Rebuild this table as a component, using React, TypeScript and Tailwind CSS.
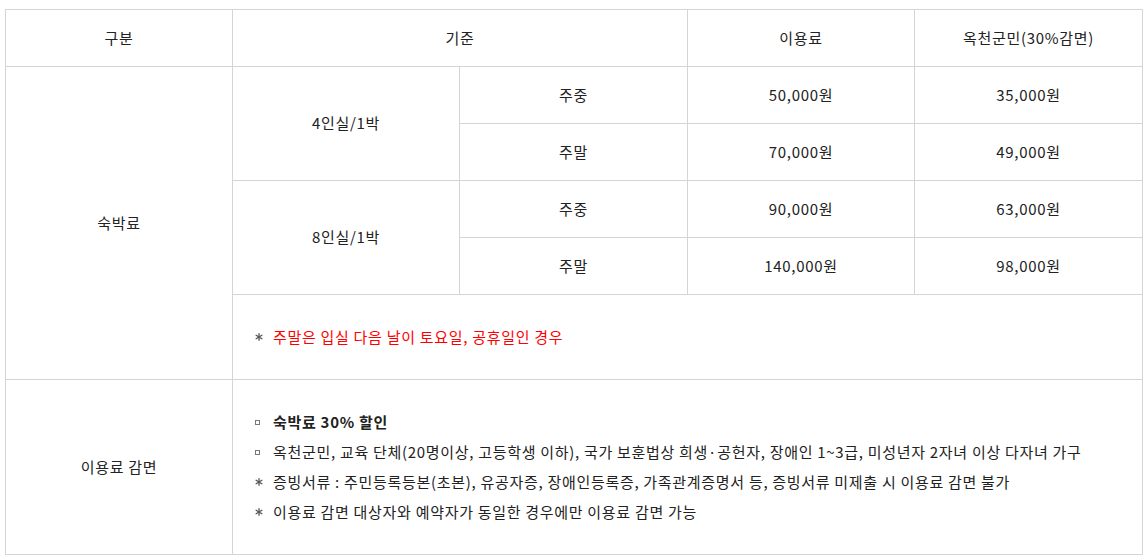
import React from "react";

const font = { fontFamily: '"Noto Sans CJK KR", "Noto Sans", sans-serif', letterSpacing: "0.7px" };

function Sq() {
  return (
    <span className="inline-flex w-[18px] shrink-0 items-center">
      <span className="block h-[5px] w-[5px] border border-[#777]" />
    </span>
  );
}
function Ast() {
  return (
    <span className="inline-flex w-[18px] shrink-0 items-center">
      <svg width="8" height="8" viewBox="0 0 8 8" className="block">
        <g stroke="#555" strokeWidth="1.3" strokeLinecap="round">
          <line x1="4" y1="0.7" x2="4" y2="7.3" />
          <line x1="1.1" y1="2.3" x2="6.9" y2="5.7" />
          <line x1="1.1" y1="5.7" x2="6.9" y2="2.3" />
        </g>
      </svg>
    </span>
  );
}

const td = "border border-[#d5d5d5] text-center align-middle";

export default function App() {
  return (
    <div className="min-h-[558px] bg-white pl-[5px] pt-[9px] text-[15px] text-[#222]" style={font}>
      <table className="w-[1137px] table-fixed border-collapse">
        <colgroup>
          <col className="w-[227px]" />
          <col className="w-[227px]" />
          <col className="w-[228px]" />
          <col className="w-[227px]" />
          <col className="w-[228px]" />
        </colgroup>
        <tbody>
          <tr className="h-[57px]">
            <td className={td}>구분</td>
            <td className={td} colSpan={2}>기준</td>
            <td className={td}>이용료</td>
            <td className={td}>옥천군민(30%감면)</td>
          </tr>
          <tr className="h-[57px]">
            <td className={td} rowSpan={5}>숙박료</td>
            <td className={td} rowSpan={2}>4인실/1박</td>
            <td className={td}>주중</td>
            <td className={td}>50,000원</td>
            <td className={td}>35,000원</td>
          </tr>
          <tr className="h-[57px]">
            <td className={td}>주말</td>
            <td className={td}>70,000원</td>
            <td className={td}>49,000원</td>
          </tr>
          <tr className="h-[57px]">
            <td className={td} rowSpan={2}>8인실/1박</td>
            <td className={td}>주중</td>
            <td className={td}>90,000원</td>
            <td className={td}>63,000원</td>
          </tr>
          <tr className="h-[57px]">
            <td className={td}>주말</td>
            <td className={td}>140,000원</td>
            <td className={td}>98,000원</td>
          </tr>
          <tr className="h-[85px]">
            <td className="border border-[#d5d5d5] pl-[22px] text-left align-middle" colSpan={4}>
              <div className="flex items-center">
                <Ast />
                <span className="text-[#ff0000]">주말은 입실 다음 날이 토요일, 공휴일인 경우</span>
              </div>
            </td>
          </tr>
          <tr className="h-[175px]">
            <td className={td}>이용료 감면</td>
            <td className="border border-[#d5d5d5] pl-[22px] text-left align-middle" colSpan={4}>
              <div className="flex flex-col">
                <div className="flex h-[30px] items-center">
                  <Sq />
                  <span className="font-bold">숙박료 30% 할인</span>
                </div>
                <div className="flex h-[30px] items-center">
                  <Sq />
                  <span>옥천군민, 교육 단체(20명이상, 고등학생 이하), 국가 보훈법상 희생·공헌자, 장애인 1~3급, 미성년자 2자녀 이상 다자녀 가구</span>
                </div>
                <div className="flex h-[30px] items-center">
                  <Ast />
                  <span>증빙서류 : 주민등록등본(초본), 유공자증, 장애인등록증, 가족관계증명서 등, 증빙서류 미제출 시 이용료 감면 불가</span>
                </div>
                <div className="flex h-[30px] items-center">
                  <Ast />
                  <span>이용료 감면 대상자와 예약자가 동일한 경우에만 이용료 감면 가능</span>
                </div>
              </div>
            </td>
          </tr>
        </tbody>
      </table>
    </div>
  );
}
